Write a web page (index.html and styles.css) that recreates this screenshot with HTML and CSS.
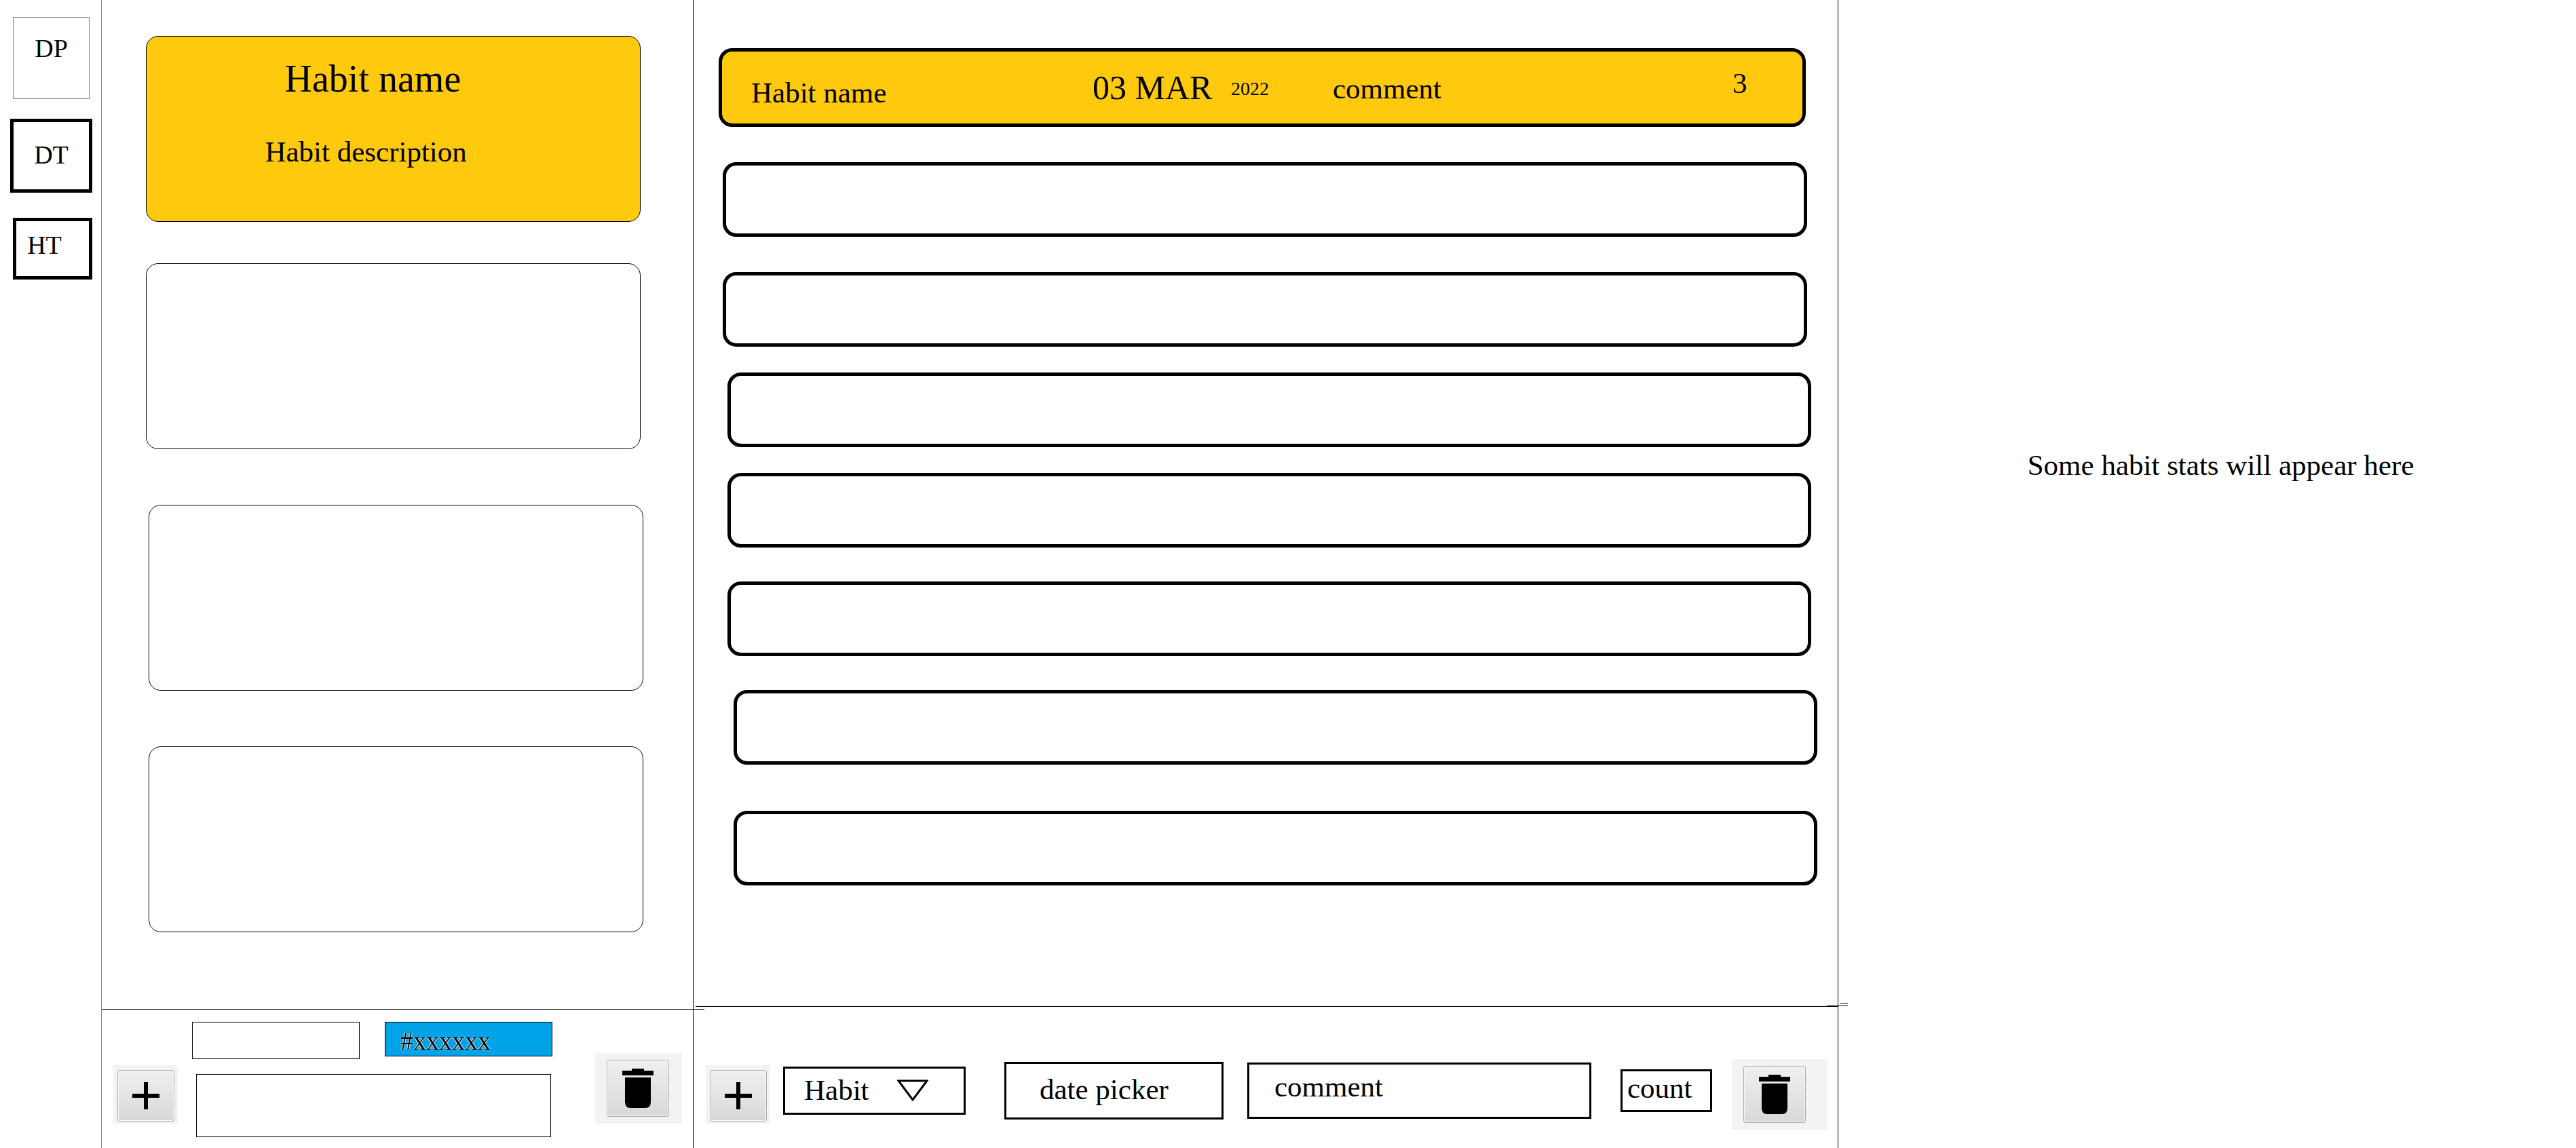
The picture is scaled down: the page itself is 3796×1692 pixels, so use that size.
FILE: index.html
```html
<!DOCTYPE html>
<html lang="en">
<head>
<meta charset="utf-8">
<title>Habit tracker</title>
<link rel="stylesheet" href="styles.css">
</head>
<body>
<div class="app">
  <nav class="rail" aria-label="Views">
    <button type="button" class="rail-button rail-button-dp">DP</button>
    <button type="button" class="rail-button rail-button-dt">DT</button>
    <button type="button" class="rail-button rail-button-ht">HT</button>
  </nav>

  <section class="habits" aria-label="Habits">
    <div class="habit-list">
      <article class="habit-card habit-card-filled">
        <h2 class="habit-title">Habit name</h2>
        <p class="habit-description">Habit description</p>
      </article>
      <article class="habit-card"></article>
      <article class="habit-card habit-card-late"></article>
      <article class="habit-card habit-card-late"></article>
    </div>
    <form class="habit-form">
      <div class="well">
        <button type="button" class="icon-button" aria-label="Add habit">
          <svg class="icon-plus" viewBox="0 0 42 42"><path d="M18 1h6v17h17v6H24v17h-6V24H1v-6h17z"/></svg>
        </button>
      </div>
      <div class="habit-fields">
        <div class="habit-fields-row">
          <input class="thin-field" type="text" aria-label="Habit name">
          <input class="thin-field color-field" type="text" value="#xxxxxx" aria-label="Habit colour">
        </div>
        <textarea class="thin-field description-field" aria-label="Habit description"></textarea>
      </div>
      <div class="well well-trash">
        <button type="button" class="icon-button icon-button-trash" aria-label="Delete habit">
          <svg class="icon-trash" viewBox="0 0 46 58"><path d="M14 0h18v3h14v7H0V3h14zM4 13h38v36q0 9-8 9H12q-8 0-8-9z"/></svg>
        </button>
      </div>
    </form>
  </section>

  <section class="entries" aria-label="Entries">
    <div class="entry-list">
      <article class="entry entry-filled">
        <span class="entry-name">Habit name</span>
        <span class="entry-date">03 MAR</span>
        <span class="entry-year">2022</span>
        <span class="entry-comment">comment</span>
        <span class="entry-count">3</span>
      </article>
      <div class="entry-group entry-group-first">
        <article class="entry"></article>
        <article class="entry"></article>
      </div>
      <div class="entry-group entry-group-middle">
        <article class="entry"></article>
        <article class="entry"></article>
        <article class="entry entry-spaced"></article>
      </div>
      <div class="entry-group entry-group-last">
        <article class="entry"></article>
        <article class="entry"></article>
      </div>
    </div>
    <form class="entry-form">
      <div class="well">
        <button type="button" class="icon-button" aria-label="Add entry">
          <svg class="icon-plus" viewBox="0 0 42 42"><path d="M18 1h6v17h17v6H24v17h-6V24H1v-6h17z"/></svg>
        </button>
      </div>
      <div class="select-box">
        <select class="field habit-select" aria-label="Habit"><option>Habit</option></select>
        <svg class="select-arrow" viewBox="0 0 46 32"><path d="M2 2h42L23 30z" fill="none" stroke="#000" stroke-width="3"/></svg>
      </div>
      <input class="field date-field" type="text" placeholder="date picker" aria-label="Date">
      <input class="field comment-field" type="text" placeholder="comment" aria-label="Comment">
      <input class="field count-field" type="text" placeholder="count" aria-label="Count">
      <div class="well well-trash well-trash-wide">
        <button type="button" class="icon-button icon-button-trash" aria-label="Delete entry">
          <svg class="icon-trash" viewBox="0 0 46 58"><path d="M14 0h18v3h14v7H0V3h14zM4 13h38v36q0 9-8 9H12q-8 0-8-9z"/></svg>
        </button>
      </div>
    </form>
  </section>

  <aside class="stats">
    <p class="stats-text">Some habit stats will appear here</p>
  </aside>
</div>
</body>
</html>
```
FILE: styles.css
```css
*, *::before, *::after { box-sizing: border-box; }

body {
  margin: 0;
  background: #fff;
  color: #000;
  font-family: "Liberation Serif", serif;
  font-size: 43px;
  line-height: 48px;
}

h2, p { margin: 0; font-weight: normal; }

button, input, select, textarea {
  margin: 0;
  color: inherit;
  font: inherit;
  border-radius: 0;
}

.app {
  display: grid;
  grid-template-columns: 150px 872fr 1687fr 1087fr;
  min-height: 100vh;
}

/* Left rail */
.rail {
  display: flex;
  flex-direction: column;
  align-items: flex-start;
  padding: 25px 13px 0 15px;
  border-right: 1px solid #808080;
}

.rail-button {
  padding: 0;
  background: #fff;
  border: 5px solid #000;
  font-size: 38px;
}

.rail-button-dp {
  width: 113px;
  height: 121px;
  margin-left: 4px;
  padding-bottom: 30px;
  border: 1px solid #808080;
}

.rail-button-dt {
  width: 121px;
  height: 109px;
  margin-top: 29px;
  padding-bottom: 4px;
}

.rail-button-ht {
  width: 117px;
  height: 91px;
  margin: 37px 0 0 4px;
  padding: 0 24px 12px 0;
}

/* Habits column */
.habits, .entries {
  display: grid;
  grid-template-columns: minmax(0, 1fr);
  grid-template-rows: 1fr auto;
  min-width: 0;
  border-right: 1px solid #000;
}

.habit-list { padding: 53px 77px 61px 65px; }

.habit-card {
  min-height: 274px;
  margin-top: 61px;
  border: 1px solid #000;
  border-radius: 18px;
}

.habit-card-filled {
  margin-top: 0;
  padding-top: 30px;
  background: #ffc90e;
}

.habit-card-late { margin: 82px -4px 0 4px; }

.habit-title {
  padding-left: 28%;
  font-size: 56px;
  line-height: 64px;
}

.habit-description { padding: 52px 0 0 24%; }

.habit-form {
  position: relative;
  display: flex;
  align-items: flex-end;
  padding: 18px 16px 16px 17px;
  border-top: 1px solid #000;
}

.habit-form::after {
  content: "";
  position: absolute;
  top: -1px;
  left: 100%;
  width: 17px;
  height: 1px;
  background: #000;
}

.habit-form .well { margin-bottom: 20px; }

.habit-fields {
  flex: 1;
  min-width: 0;
  margin: 0 63px 0 21px;
}

.habit-fields-row {
  display: flex;
  align-items: flex-start;
  gap: 37px;
}

.thin-field {
  display: block;
  flex: 1;
  min-width: 0;
  height: 55px;
  padding: 0 22px;
  background: #fff;
  border: 1px solid #000;
}

.color-field {
  height: 51px;
  padding-top: 4px;
  background: #00a2e8;
  font-size: 38px;
  text-shadow: 1px 0 1px #fff, -1px 0 1px #fff;
}

.description-field {
  width: calc(100% - 8px);
  height: 93px;
  margin: 22px 0 0 6px;
  resize: none;
}

/* Icon buttons */
.well {
  flex: none;
  width: 95px;
  padding: 7px 5px 3px 6px;
  background: #f3f3f3;
}

.well-trash {
  width: 128px;
  padding: 10px 17px;
}

.well-trash-wide { width: 141px; }

.icon-button {
  display: flex;
  align-items: center;
  justify-content: center;
  width: 84px;
  height: 76px;
  padding: 0;
  background: linear-gradient(#f0f0f0, #d8d8d8);
  border: 1px solid #adadad;
  border-radius: 3px;
  box-shadow: inset 0 0 0 1px #f8f8f8;
}

.icon-button-trash {
  width: 92px;
  height: 84px;
}

.icon-plus { width: 42px; height: 42px; }
.icon-trash { width: 46px; height: 58px; }

/* Entries column */
.entry-list { padding: 71px 45px 52px 43px; }

.entry {
  height: 110px;
  border: 5px solid #000;
  border-radius: 20px;
}

.entry-filled {
  display: grid;
  grid-template-columns: 503fr 204fr 150fr 589fr 103fr;
  align-items: center;
  height: 116px;
  margin: 0 2px 0 -6px;
  padding-left: 43px;
  background: #ffc90e;
}

.entry-name { padding-top: 16px; }
.entry-date { font-size: 50px; }
.entry-year { font-size: 28px; }
.entry-count { padding-bottom: 12px; }

.entry-year, .entry-comment { padding-top: 4px; }

.entry-group {
  display: flex;
  flex-direction: column;
}

.entry-group-first {
  gap: 52px;
  margin-top: 52px;
}

.entry-group-middle {
  gap: 38px;
  margin: 38px -6px 0 7px;
}

.entry-spaced { margin-top: 12px; }

.entry-group-last {
  gap: 68px;
  margin: 50px -15px 0 16px;
}

.entry-form {
  position: relative;
  display: flex;
  align-items: center;
  margin-left: 3px;
  padding: 65px 15px 27px;
  border-top: 1px solid #000;
}

.entry-form::before, .entry-form::after {
  content: "";
  position: absolute;
  height: 1px;
  background: #000;
}

.entry-form::before {
  top: -2px;
  right: -15px;
  width: 31px;
}

.entry-form::after {
  top: -6px;
  right: -15px;
  width: 11px;
}

.entry-form .well { margin-top: 12px; }

.field {
  background: #fff;
  border: 3px solid #000;
}

.field::placeholder { color: #000; opacity: 1; }

.select-box {
  display: grid;
  align-items: center;
  width: 269px;
  margin-left: 19px;
}

.habit-select {
  grid-area: 1 / 1;
  width: 100%;
  height: 71px;
  padding: 0 28px;
  appearance: none;
}

.select-arrow {
  grid-area: 1 / 1;
  justify-self: end;
  width: 46px;
  height: 32px;
  margin-right: 55px;
  pointer-events: none;
}

.date-field {
  width: 323px;
  height: 85px;
  margin-left: 57px;
  padding: 0 0 4px 49px;
}

.comment-field {
  flex: 1;
  min-width: 0;
  height: 83px;
  margin-left: 35px;
  padding: 0 20px 12px 37px;
}

.count-field {
  width: 135px;
  height: 63px;
  margin: 0 29px 0 43px;
  padding: 0 0 8px 7px;
}

/* Stats column */
.stats { padding: 662px 0 0 40px; }

.stats-text { text-align: center; }
```
